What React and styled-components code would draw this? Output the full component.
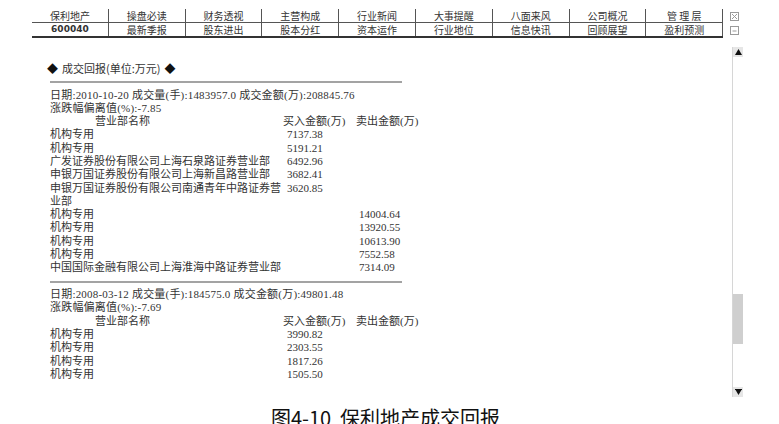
import React from 'react';
import styled, { createGlobalStyle } from 'styled-components';

const GlobalStyle = createGlobalStyle`
    html, body {
        margin: 0;
        padding: 0;
        background: #fff;
    }
    body {
        font-family: "Liberation Serif", "Noto Sans CJK SC", serif;
    }
`;

const Page = styled.div`
    width: 779px;
    height: 424px;
    overflow: hidden;
`;

const Window = styled.div`
    padding: 9px 0 0 32px;
`;

const TabBar = styled.div`
    display: flex;
    align-items: flex-start;
`;

const NavTable = styled.div`
    display: grid;
    grid-template-columns: repeat(9, 76.8px);
    border-bottom: 2px solid #333;
`;

const NavCell = styled.div`
    height: 13px;
    line-height: 13px;
    display: flex;
    align-items: center;
    justify-content: center;
    color: #333;
    font-weight: ${(p) => (p.$bold ? 700 : 400)};
    font-family: ${(p) => (p.$bold ? '"DejaVu Sans", sans-serif' : '"Noto Sans CJK SC", sans-serif')};
    font-size: ${(p) => (p.$bold ? '9px' : '10px')};
    border-right: 1px solid #555;
    border-bottom: ${(p) => (p.$top ? '1px solid #555' : 'none')};
`;

const IconColumn = styled.div`
    display: flex;
    flex-direction: column;
    gap: 5px;
    margin: 3px 0 0 7px;
`;

const Body = styled.div`
    display: flex;
    margin-top: 9px;
`;

const Content = styled.div`
    width: 700px;
    padding: 14px 0 0 18px;
    box-sizing: border-box;
    color: #333;
    font-size: 11px;
`;

const Heading = styled.div`
    line-height: 14px;
    margin-left: -3px;
    color: #333;
    font-family: "Noto Sans CJK SC", sans-serif;
    span {
        color: #111;
        margin: 0 4px 0 0;
    }
    span:last-child {
        margin: 0 0 0 4px;
    }
`;

const Rule = styled.div`
    width: 352px;
    height: 2px;
    background: #a3a3a3;
    margin: 6px 0 5.5px 0;
`;

const Block = styled.div`
    line-height: 13.3px;
`;

const Line = styled.div`
    white-space: nowrap;
    letter-spacing: 0.2px;
`;

const Row = styled.div`
    display: grid;
    grid-template-columns: 233px 73px 1fr;
    align-items: start;
`;

const NameCell = styled.div`
    padding-left: ${(p) => (p.$head ? '45px' : '0')};
    word-break: break-all;
`;

const NumCell = styled.div`
    padding-left: ${(p) => (p.$head ? '0' : p.$pad)};
    white-space: nowrap;
`;

const Scrollbar = styled.div`
    width: 10px;
    height: 350px;
    display: flex;
    flex-direction: column;
    border-left: 1px solid #d6d6d6;
`;

const ArrowButton = styled.div`
    height: 10px;
    background: #e6e6e6;
    display: flex;
    align-items: center;
    justify-content: center;
`;

const Track = styled.div`
    flex: 1;
`;

const Thumb = styled.div`
    margin-top: 237px;
    height: 50px;
    background: #cfcfcf;
`;

const Caption = styled.div`
    margin-top: 11px;
    padding-right: 8px;
    text-align: center;
    font-family: "Noto Sans CJK SC", sans-serif;
    font-size: 20px;
    font-weight: 400;
    line-height: 20px;
    color: #111;
    white-space: pre;
`;

const topTabs = ['保利地产', '操盘必读', '财务透视', '主营构成', '行业新闻', '大事提醒', '八面来风', '公司概况', '管 理 层'];
const bottomTabs = ['600040', '最新季报', '股东进出', '股本分红', '资本运作', '行业地位', '信息快讯', '回顾展望', '盈利预测'];

const blocks = [
    {
        summary: '日期:2010-10-20 成交量(手):1483957.0 成交金额(万):208845.76',
        change: '涨跌幅偏离值(%):-7.85',
        rows: [
            ['机构专用', '7137.38', ''],
            ['机构专用', '5191.21', ''],
            ['广发证券股份有限公司上海石泉路证券营业部', '6492.96', ''],
            ['申银万国证券股份有限公司上海新昌路营业部', '3682.41', ''],
            ['申银万国证券股份有限公司南通青年中路证券营业部', '3620.85', ''],
            ['机构专用', '', '14004.64'],
            ['机构专用', '', '13920.55'],
            ['机构专用', '', '10613.90'],
            ['机构专用', '', '7552.58'],
            ['中国国际金融有限公司上海淮海中路证券营业部', '', '7314.09'],
        ],
    },
    {
        summary: '日期:2008-03-12 成交量(手):184575.0 成交金额(万):49801.48',
        change: '涨跌幅偏离值(%):-7.69',
        rows: [
            ['机构专用', '3990.82', ''],
            ['机构专用', '2303.55', ''],
            ['机构专用', '1817.26', ''],
            ['机构专用', '1505.50', ''],
        ],
    },
];

const CloseIcon = () => (
    <svg width="9" height="9" viewBox="0 0 9 9">
        <rect x="0.5" y="0.5" width="8" height="8" fill="none" stroke="#9a9a9a" />
        <path d="M2 2 L7 7 M7 2 L2 7" stroke="#9a9a9a" />
    </svg>
);

const MinIcon = () => (
    <svg width="9" height="9" viewBox="0 0 9 9">
        <rect x="0.5" y="0.5" width="8" height="8" fill="none" stroke="#9a9a9a" />
        <path d="M2.5 5 L6.5 5" stroke="#9a9a9a" />
    </svg>
);

const Triangle = ({ up }) => (
    <svg width="7" height="6" viewBox="0 0 7 6">
        <path d={up ? 'M3.5 0 L7 6 L0 6 Z' : 'M0 0 L7 0 L3.5 6 Z'} fill="#111" />
        {!up && <path d="M0 0.5 L7 0.5" stroke="#111" />}
    </svg>
);

const TradeBlock = ({ data }) => (
    <Block>
        <Line>{data.summary}</Line>
        <Line>{data.change}</Line>
        <Row>
            <NameCell $head>营业部名称</NameCell>
            <NumCell $head>买入金额(万)</NumCell>
            <NumCell $head>卖出金额(万)</NumCell>
        </Row>
        {data.rows.map(([name, buy, sell], i) => (
            <Row key={i}>
                <NameCell>{name}</NameCell>
                <NumCell $pad="4px">{buy}</NumCell>
                <NumCell $pad="3px">{sell}</NumCell>
            </Row>
        ))}
    </Block>
);

const App = () => {
    return (
        <Page>
            <GlobalStyle />
            <Window>
                <TabBar>
                    <NavTable>
                        {topTabs.map((t) => (
                            <NavCell key={t} $top>{t}</NavCell>
                        ))}
                        {bottomTabs.map((t, i) => (
                            <NavCell key={t} $bold={i === 0}>{t}</NavCell>
                        ))}
                    </NavTable>
                    <IconColumn>
                        <CloseIcon />
                        <MinIcon />
                    </IconColumn>
                </TabBar>
                <Body>
                    <Content>
                        <Heading>
                            <span>◆</span>成交回报(单位:万元)<span>◆</span>
                        </Heading>
                        <Rule />
                        <TradeBlock data={blocks[0]} />
                        <Rule />
                        <TradeBlock data={blocks[1]} />
                    </Content>
                    <Scrollbar>
                        <ArrowButton>
                            <Triangle up />
                        </ArrowButton>
                        <Track>
                            <Thumb />
                        </Track>
                        <ArrowButton>
                            <Triangle />
                        </ArrowButton>
                    </Scrollbar>
                </Body>
            </Window>
            <Caption>{'图4-10  保利地产成交回报'}</Caption>
        </Page>
    );
};

export default App;
